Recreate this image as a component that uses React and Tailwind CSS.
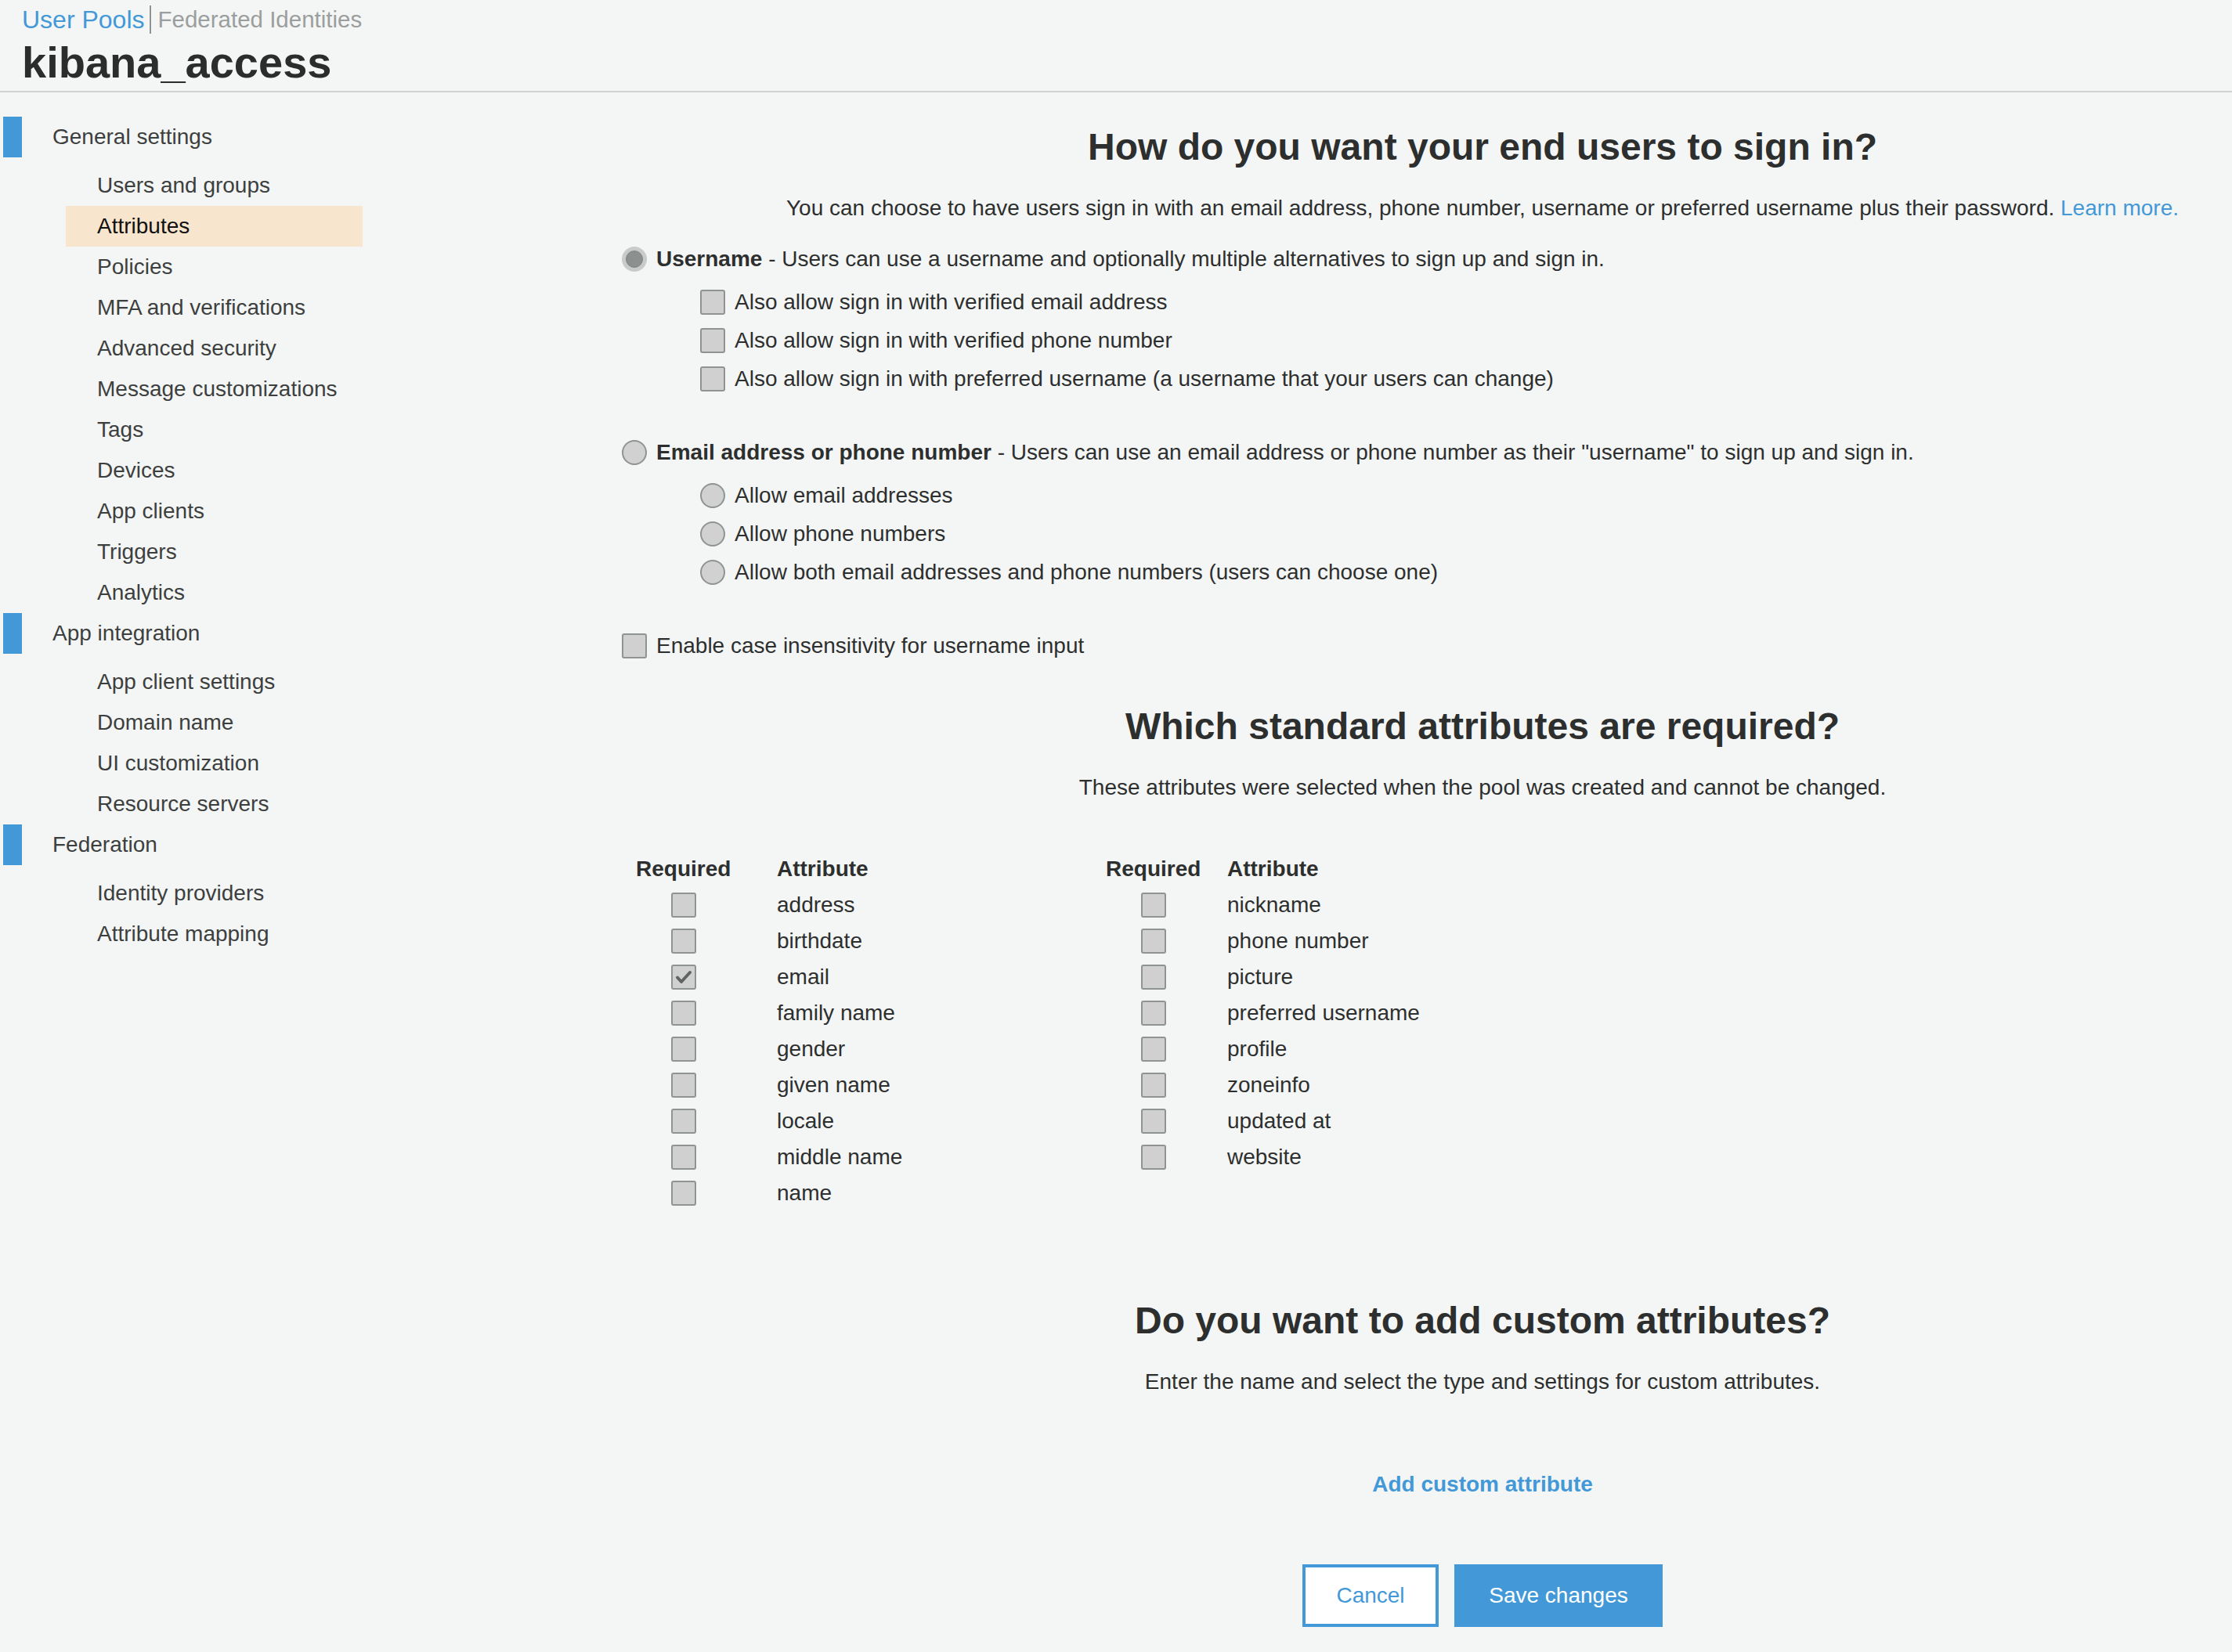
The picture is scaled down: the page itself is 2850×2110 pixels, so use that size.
import React from "react";

const navSections = [
  {
    title: "General settings",
    items: [
      "Users and groups",
      "Attributes",
      "Policies",
      "MFA and verifications",
      "Advanced security",
      "Message customizations",
      "Tags",
      "Devices",
      "App clients",
      "Triggers",
      "Analytics",
    ],
  },
  {
    title: "App integration",
    items: ["App client settings", "Domain name", "UI customization", "Resource servers"],
  },
  {
    title: "Federation",
    items: ["Identity providers", "Attribute mapping"],
  },
];

const leftAttrs = [
  "address",
  "birthdate",
  "email",
  "family name",
  "gender",
  "given name",
  "locale",
  "middle name",
  "name",
];

const rightAttrs = [
  "nickname",
  "phone number",
  "picture",
  "preferred username",
  "profile",
  "zoneinfo",
  "updated at",
  "website",
];

const Radio = ({ checked }) =>
  checked ? (
    <span className="w-[32px] h-[32px] shrink-0 rounded-full bg-[#c9cbca] flex items-center justify-center">
      <span className="w-[22px] h-[22px] rounded-full bg-[#8c9190] border border-[#7f8483]" />
    </span>
  ) : (
    <span className="w-[32px] h-[32px] shrink-0 rounded-full bg-[#d0d1d0] border-2 border-[#8f9493]" />
  );

const Checkbox = ({ checked }) => (
  <span className="w-[32px] h-[32px] shrink-0 rounded-[3px] bg-[#cfd0cf] border-2 border-[#8f9493] flex items-center justify-center">
    {checked && (
      <svg width="24" height="24" viewBox="0 0 24 24" fill="none">
        <path d="M4 12.5l5 5.5 11-12" stroke="#5f6463" strokeWidth="4" strokeLinecap="round" strokeLinejoin="round" />
      </svg>
    )}
  </span>
);

const OptionRow = ({ control, children, indent }) => (
  <div className={`h-[49px] flex items-center gap-[12px] ${indent ? "pl-[100px]" : ""}`}>
    {control}
    <span>{children}</span>
  </div>
);

const AttrTable = ({ rows, firstCol, checkedItem }) => (
  <div className="flex flex-col">
    <div className="h-[46px] flex items-center font-bold">
      <span style={{ width: firstCol }} className="shrink-0">Required</span>
      <span>Attribute</span>
    </div>
    {rows.map((r) => (
      <div key={r} className="h-[46px] flex items-center">
        <span style={{ width: firstCol }} className="shrink-0">
          <span className="w-[121px] flex justify-center">
            <Checkbox checked={r === checkedItem} />
          </span>
        </span>
        <span>{r}</span>
      </div>
    ))}
  </div>
);

export default function App() {
  return (
    <div className="w-[2850px] h-[2110px] overflow-hidden bg-[#f4f6f5] text-[#2d2f2f] font-['Liberation_Sans',Arial,sans-serif] text-[28px] leading-[36px]">
      {/* Header */}
      <header className="pl-[28px] pt-[7px] pb-[4px] border-b-2 border-[#cfd1d0]">
        <div className="flex items-center h-[36px] text-[32px] leading-[36px]">
          <span className="text-[#4399d8]">User Pools</span>
          <span className="w-[2px] h-[36px] bg-[#8f9493] ml-[6px] mr-[9px]" />
          <span className="text-[#9b9e9e] text-[29.5px]">Federated Identities</span>
        </div>
        <h1 className="mt-[5px] text-[56px] leading-[64px] font-bold text-[#2b2d2d]">kibana_access</h1>
      </header>

      <div className="flex">
        {/* Sidebar */}
        <aside className="w-[463px] shrink-0 pt-[31px] text-[#3d3f3f]">
          {navSections.map((s) => (
            <div key={s.title}>
              <div className="h-[52px] flex items-center">
                <span className="w-[24px] h-[52px] ml-[4px] bg-[#4399d8]" />
                <span className="ml-[39px]">{s.title}</span>
              </div>
              <ul className="mt-[10px] pl-[84px]">
                {s.items.map((item) => (
                  <li
                    key={item}
                    className={`h-[52px] flex items-center pl-[40px] ${
                      item === "Attributes" ? "bg-[#f8e5cd] text-[#111]" : ""
                    }`}
                  >
                    {item}
                  </li>
                ))}
              </ul>
            </div>
          ))}
        </aside>

        {/* Main */}
        <main className="flex-1 pl-[331px] pt-[42px]">
          <h2 className="pl-[142px] text-center text-[48px] leading-[56px] font-bold">
            How do you want your end users to sign in?
          </h2>
          <p className="mt-[32px] pl-[142px] text-center">
            You can choose to have users sign in with an email address, phone number, username or preferred username plus their password.{" "}
            <span className="text-[#4399d8]">Learn more.</span>
          </p>

          <div className="mt-[22px]">
            <OptionRow control={<Radio checked />}>
              <b>Username</b> - Users can use a username and optionally multiple alternatives to sign up and sign in.
            </OptionRow>
            <div className="mt-[6px]">
              <OptionRow indent control={<Checkbox />}>Also allow sign in with verified email address</OptionRow>
              <OptionRow indent control={<Checkbox />}>Also allow sign in with verified phone number</OptionRow>
              <OptionRow indent control={<Checkbox />}>
                Also allow sign in with preferred username (a username that your users can change)
              </OptionRow>
            </div>
          </div>

          <div className="mt-[45px]">
            <OptionRow control={<Radio />}>
              <b>Email address or phone number</b> - Users can use an email address or phone number as their "username" to sign up and sign in.
            </OptionRow>
            <div className="mt-[6px]">
              <OptionRow indent control={<Radio />}>Allow email addresses</OptionRow>
              <OptionRow indent control={<Radio />}>Allow phone numbers</OptionRow>
              <OptionRow indent control={<Radio />}>
                Allow both email addresses and phone numbers (users can choose one)
              </OptionRow>
            </div>
          </div>

          <div className="mt-[45px]">
            <OptionRow control={<Checkbox />}>Enable case insensitivity for username input</OptionRow>
          </div>

          <h2 className="mt-[51px] pl-[142px] text-center text-[48px] leading-[56px] font-bold">
            Which standard attributes are required?
          </h2>
          <p className="mt-[32px] pl-[142px] text-center">
            These attributes were selected when the pool was created and cannot be changed.
          </p>

          <div className="mt-[63px] ml-[18px] flex">
            <div className="w-[600px] shrink-0">
              <AttrTable rows={leftAttrs} firstCol={180} checkedItem="email" />
            </div>
            <AttrTable rows={rightAttrs} firstCol={155} />
          </div>

          <h2 className="mt-[112px] pl-[142px] text-center text-[48px] leading-[56px] font-bold">
            Do you want to add custom attributes?
          </h2>
          <p className="mt-[32px] pl-[142px] text-center">
            Enter the name and select the type and settings for custom attributes.
          </p>

          <p className="mt-[95px] pl-[142px] text-center font-bold text-[#4399d8]">Add custom attribute</p>

          <div className="mt-[84px] pl-[142px] flex justify-center gap-[20px]">
            <button className="w-[174px] h-[80px] border-4 border-[#4399d8] bg-white text-[#4399d8]">Cancel</button>
            <button className="w-[266px] h-[80px] bg-[#4399d8] text-white">Save changes</button>
          </div>
        </main>
      </div>
    </div>
  );
}
